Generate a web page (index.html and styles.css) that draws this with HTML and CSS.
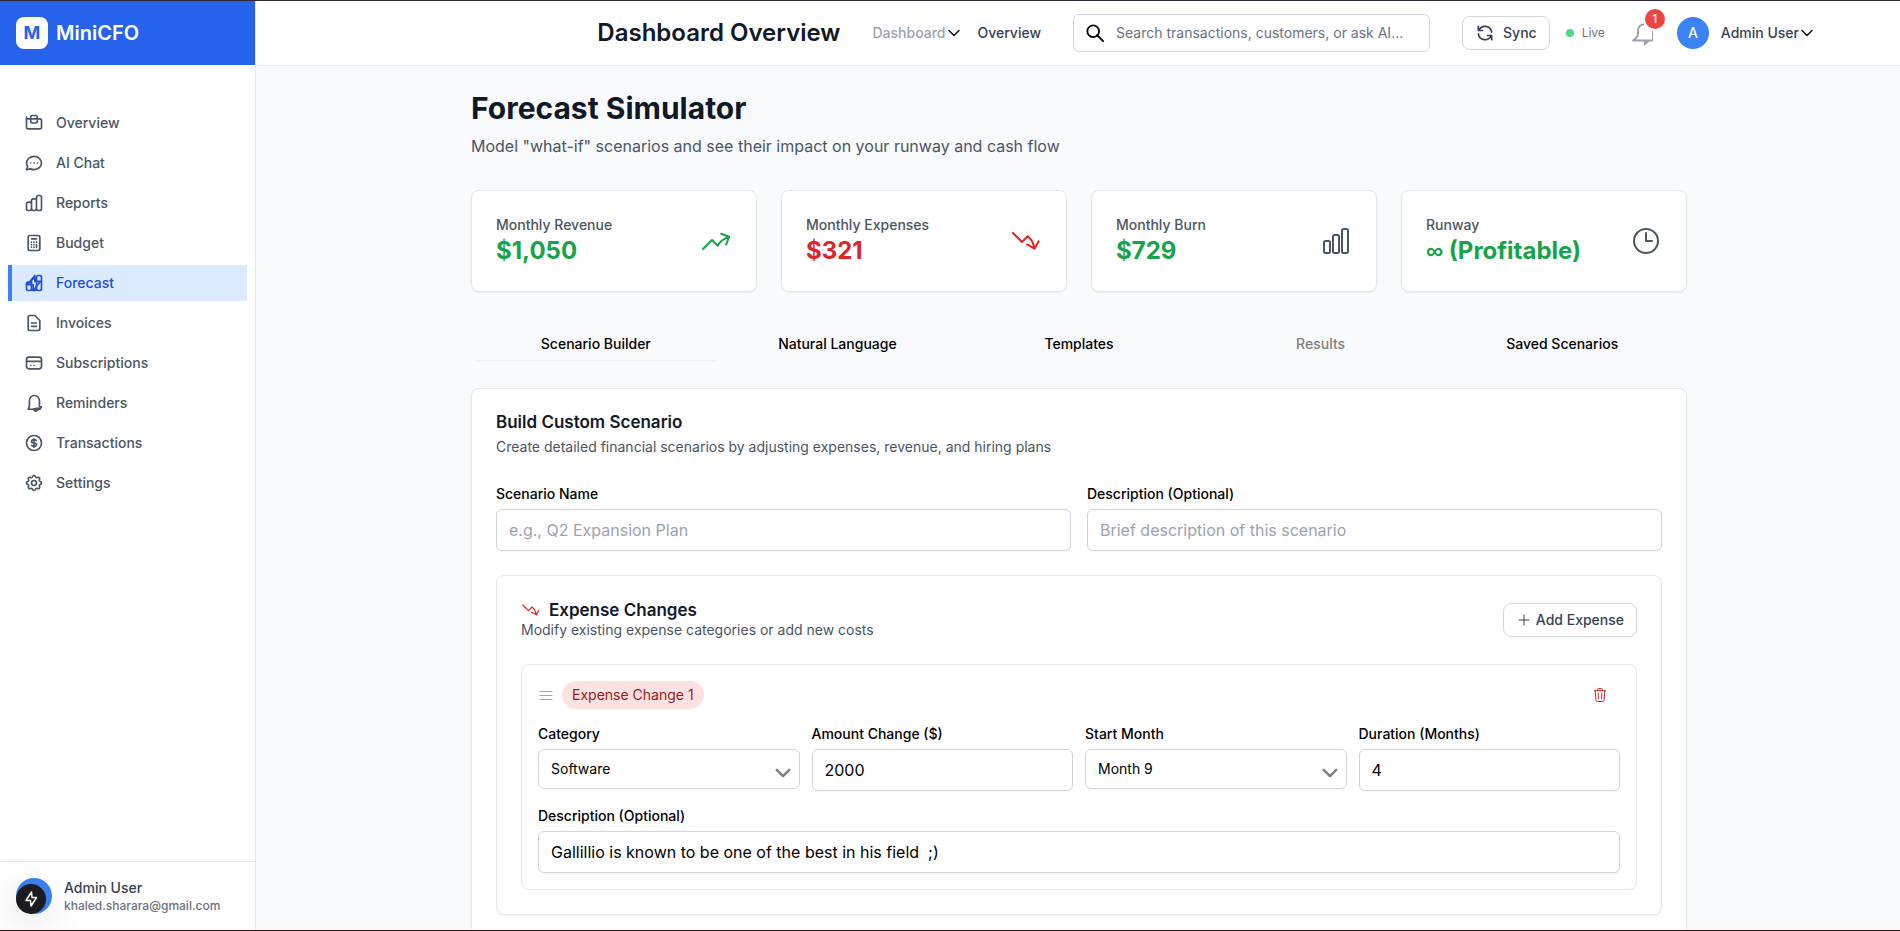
FILE: index.html
```html
<!DOCTYPE html>
<html lang="en">
<head>
<meta charset="utf-8">
<title>MiniCFO - Forecast Simulator</title>
<link rel="stylesheet" href="styles.css">
</head>
<body>
<svg class="sprite" aria-hidden="true">
  <symbol id="bars" viewBox="0 0 24 24"><path d="M3 13.125C3 12.504 3.504 12 4.125 12h2.25c.621 0 1.125.504 1.125 1.125v6.75C7.5 20.496 6.996 21 6.375 21h-2.25A1.125 1.125 0 013 19.875v-6.75zM9.75 8.625c0-.621.504-1.125 1.125-1.125h2.25c.621 0 1.125.504 1.125 1.125v11.25c0 .621-.504 1.125-1.125 1.125h-2.25a1.125 1.125 0 01-1.125-1.125V8.625zM16.5 4.125c0-.621.504-1.125 1.125-1.125h2.25C20.496 3 21 3.504 21 4.125v15.75c0 .621-.504 1.125-1.125 1.125h-2.25a1.125 1.125 0 01-1.125-1.125V4.125z"/></symbol>
  <symbol id="trend-up" viewBox="0 0 24 24"><path d="M2.25 18L9 11.25l4.306 4.307a11.95 11.95 0 015.814-5.519l2.74-1.22m0 0l-5.94-2.28m5.94 2.28l-2.28 5.941"/></symbol>
  <symbol id="trend-down" viewBox="0 0 24 24"><path d="M2.25 6L9 12.75l4.286-4.286a11.948 11.948 0 014.306 6.43l.776 2.898m0 0l3.182-5.511m-3.182 5.51l-5.511-3.181"/></symbol>
  <symbol id="chevron" viewBox="0 0 16 16"><path d="M3 5.5l5 5 5-5"/></symbol>
  <symbol id="joined-bars" viewBox="0 0 24 24"><path d="M9 19v-6a2 2 0 00-2-2H5a2 2 0 00-2 2v6a2 2 0 002 2h2a2 2 0 002-2zm0 0V9a2 2 0 012-2h2a2 2 0 012 2v10m-6 0a2 2 0 002 2h2a2 2 0 002-2m0 0V5a2 2 0 012-2h2a2 2 0 012 2v14a2 2 0 01-2 2h-2a2 2 0 01-2-2z"/></symbol>
</svg>

<div class="app">
  <aside class="sidebar">
    <div class="brand"><span class="brand-mark">M</span><span class="brand-name">MiniCFO</span></div>
    <nav class="nav" aria-label="Main">
      <a class="nav-item" href="#"><svg class="icon nav-icon" viewBox="0 0 24 24"><path d="M3 5v12a2 2 0 002 2h14a2 2 0 002-2V9a2 2 0 00-2-2H5a2 2 0 01-2-2z"/><rect x="8" y="3" width="8" height="9" rx="2"/></svg>Overview</a>
      <a class="nav-item" href="#"><svg class="icon nav-icon" viewBox="0 0 24 24"><path d="M8 12h.01M12 12h.01M16 12h.01M21 12c0 4.418-4.03 8-9 8a9.86 9.86 0 01-4.255-.949L3 20l1.395-3.72C3.512 15.042 3 13.574 3 12c0-4.418 4.03-8 9-8s9 3.582 9 8z"/></svg>AI Chat</a>
      <a class="nav-item" href="#"><svg class="icon nav-icon"><use href="#joined-bars"/></svg>Reports</a>
      <a class="nav-item" href="#"><svg class="icon nav-icon" viewBox="0 0 24 24"><path d="M9 7h6m0 10v-3m-3 3h.01M9 17h.01M9 14h.01M12 14h.01M15 11h.01M12 11h.01M9 11h.01M7 21h10a2 2 0 002-2V5a2 2 0 00-2-2H7a2 2 0 00-2 2v14a2 2 0 002 2z"/></svg>Budget</a>
      <a class="nav-item nav-item-active" href="#" aria-current="page"><svg class="icon nav-icon" viewBox="0 0 24 24"><use href="#joined-bars" width="24" height="24"/><path d="M13 10V3L4 14h7v7l9-11h-7z"/></svg>Forecast</a>
      <a class="nav-item" href="#"><svg class="icon nav-icon" viewBox="0 0 24 24"><path d="M9 12h6m-6 4h6m2 5H7a2 2 0 01-2-2V5a2 2 0 012-2h5.586a1 1 0 01.707.293l5.414 5.414a1 1 0 01.293.707V19a2 2 0 01-2 2z"/></svg>Invoices</a>
      <a class="nav-item" href="#"><svg class="icon nav-icon" viewBox="0 0 24 24"><path d="M3 10h18M8 15h.01M12 15h.01M6 19h12a3 3 0 003-3V8a3 3 0 00-3-3H6a3 3 0 00-3 3v8a3 3 0 003 3z"/></svg>Subscriptions</a>
      <a class="nav-item" href="#"><svg class="icon nav-icon" viewBox="0 0 24 24"><path d="M5 19l1.500-2.500V9a5.500 5.500 0 0112 0v7.500H21l-2 3H5z"/><path d="M11 19.500l3 2.500 5-3.500h-4z" fill="currentColor"/></svg>Reminders</a>
      <a class="nav-item" href="#"><svg class="icon nav-icon" viewBox="0 0 24 24"><path d="M12 8c-1.657 0-3 .895-3 2s1.343 2 3 2 3 .895 3 2-1.343 2-3 2m0-8c1.110 0 2.080.402 2.599 1M12 8V7m0 1v8m0 0v1m0-1c-1.110 0-2.080-.402-2.599-1M21 12a9 9 0 11-18 0 9 9 0 0118 0z"/></svg>Transactions</a>
      <a class="nav-item" href="#"><svg class="icon nav-icon" viewBox="0 0 24 24"><path d="M10.325 4.317c.426-1.756 2.924-1.756 3.350 0a1.724 1.724 0 002.573 1.066c1.543-.940 3.310.826 2.370 2.370a1.724 1.724 0 001.065 2.572c1.756.426 1.756 2.924 0 3.350a1.724 1.724 0 00-1.066 2.573c.940 1.543-.826 3.310-2.370 2.370a1.724 1.724 0 00-2.572 1.065c-.426 1.756-2.924 1.756-3.350 0a1.724 1.724 0 00-2.573-1.066c-1.543.940-3.310-.826-2.370-2.370a1.724 1.724 0 00-1.065-2.572c-1.756-.426-1.756-2.924 0-3.350a1.724 1.724 0 001.066-2.573c-.940-1.543.826-3.310 2.370-2.370.996.608 2.296.070 2.572-1.065z"/><circle cx="12" cy="12" r="3"/></svg>Settings</a>
    </nav>
    <div class="account">
      <div class="account-avatar">
        <button class="dev-button" type="button" aria-label="Developer tools"><svg class="icon bolt" viewBox="0 0 16 16"><path d="M8.500 1L3 9.500h4.500L8 15l5.500-8.500H9z"/></svg></button>
      </div>
      <div class="account-text"><div class="account-name">Admin User</div><div class="account-mail">khaled.sharara@gmail.com</div></div>
    </div>
  </aside>

  <div class="content">
    <header class="topbar">
      <h2 class="topbar-title">Dashboard Overview</h2>
      <nav class="crumbs" aria-label="Breadcrumb">
        <a class="crumb-parent" href="#">Dashboard<svg class="icon chevron"><use href="#chevron"/></svg></a>
        <a class="crumb-current" href="#">Overview</a>
      </nav>
      <div class="search">
        <svg class="icon search-icon" viewBox="0 0 20 20"><circle cx="8" cy="8" r="6.500"/><path d="M12.500 12.500L19 19"/></svg>
        <input class="search-input" type="text" aria-label="Search" placeholder="Search transactions, customers, or ask AI...">
      </div>
      <div class="status">
        <button class="button" type="button"><svg class="icon sync-icon" viewBox="0 0 24 24"><path d="M4 4v5h.582m15.356 2A8.001 8.001 0 004.582 9m0 0H9m11 11v-5h-.581m0 0a8.003 8.003 0 01-15.357-2m15.357 2H15"/></svg>Sync</button>
        <span class="live">Live</span>
      </div>
      <div class="user">
        <button class="bell" type="button" aria-label="Notifications"><svg class="icon bell-icon" viewBox="0 0 24 24"><path d="M15 3.500c-4 0-6 3-6 6.500v3c0 2-1 3-2.500 4.500L4 19.500h20"/><path class="bell-edge" d="M23.500 10v9"/><path class="bell-clapper" d="M14 20h7l-6 5v-3.500z"/></svg><span class="badge">1</span></button>
        <span class="user-avatar">A</span>
        <button class="user-menu" type="button">Admin User<svg class="icon chevron"><use href="#chevron"/></svg></button>
      </div>
    </header>

    <main class="main">
      <div class="page">
        <h1 class="page-title">Forecast Simulator</h1>
        <p class="page-lead">Model "what-if" scenarios and see their impact on your runway and cash flow</p>

        <section class="stats" aria-label="Key figures">
          <div class="stat"><div><div class="stat-label">Monthly Revenue</div><div class="stat-value green">$1,050</div></div><svg class="icon stat-icon green"><use href="#trend-up"/></svg></div>
          <div class="stat"><div><div class="stat-label">Monthly Expenses</div><div class="stat-value red">$321</div></div><svg class="icon stat-icon red"><use href="#trend-down"/></svg></div>
          <div class="stat"><div><div class="stat-label">Monthly Burn</div><div class="stat-value green">$729</div></div><svg class="icon stat-icon"><use href="#bars"/></svg></div>
          <div class="stat"><div><div class="stat-label">Runway</div><div class="stat-value green"><span class="infinity">∞</span> (Profitable)</div></div><svg class="icon stat-icon" viewBox="0 0 24 24"><path d="M12 6v6h4.500m4.500 0a9 9 0 11-18 0 9 9 0 0118 0z"/></svg></div>
        </section>

        <div class="tabs" role="tablist">
          <button class="tab tab-active" type="button" role="tab" aria-selected="true">Scenario Builder</button>
          <button class="tab" type="button" role="tab">Natural Language</button>
          <button class="tab" type="button" role="tab">Templates</button>
          <button class="tab" type="button" role="tab" disabled>Results</button>
          <button class="tab" type="button" role="tab">Saved Scenarios</button>
        </div>

        <section class="panel">
          <h3 class="heading">Build Custom Scenario</h3>
          <p class="note panel-note">Create detailed financial scenarios by adjusting expenses, revenue, and hiring plans</p>
          <div class="fields fields-two">
            <div><label class="label" for="name">Scenario Name</label><input class="input" id="name" type="text" placeholder="e.g., Q2 Expansion Plan"></div>
            <div><label class="label" for="desc">Description (Optional)</label><input class="input" id="desc" type="text" placeholder="Brief description of this scenario"></div>
          </div>

          <section class="expenses">
            <div class="expenses-head">
              <div>
                <h3 class="heading heading-icon"><svg class="icon heading-trend red"><use href="#trend-down"/></svg>Expense Changes</h3>
                <p class="note">Modify existing expense categories or add new costs</p>
              </div>
              <button class="button button-add" type="button"><svg class="icon small-icon" viewBox="0 0 16 16"><path d="M8 3v10M3 8h10"/></svg>Add Expense</button>
            </div>
            <div class="change">
              <div class="change-head">
                <svg class="icon grip" viewBox="0 0 16 16"><path d="M2 4.500h12M2 8.500h12M2 12.500h12"/></svg>
                <span class="pill">Expense Change 1</span>
                <button class="trash" type="button" aria-label="Remove expense change"><svg class="icon small-icon" viewBox="0 0 24 24"><path d="M14.740 9l-.346 9m-4.788 0L9.260 9m9.968-3.210c.342.052.682.107 1.022.166m-1.022-.165L18.160 19.673a2.250 2.250 0 01-2.244 2.077H8.084a2.250 2.250 0 01-2.244-2.077L4.772 5.790m14.456 0a48.108 48.108 0 00-3.478-.397m-12 .562c.340-.059.680-.114 1.022-.165m0 0a48.110 48.110 0 013.478-.397m7.500 0v-.916c0-1.180-.910-2.164-2.090-2.201a51.964 51.964 0 00-3.320 0c-1.180.037-2.090 1.022-2.090 2.201v.916m7.500 0a48.667 48.667 0 00-7.500 0"/></svg></button>
              </div>
              <div class="fields fields-four">
                <div><label class="label" for="category">Category</label><div class="select-wrap"><select class="select" id="category"><option>Software</option></select><svg class="icon select-arrow"><use href="#chevron"/></svg></div></div>
                <div><label class="label" for="amount">Amount Change ($)</label><input class="input" id="amount" type="text" inputmode="numeric" value="2000"></div>
                <div><label class="label" for="start">Start Month</label><div class="select-wrap"><select class="select" id="start"><option>Month 9</option></select><svg class="icon select-arrow"><use href="#chevron"/></svg></div></div>
                <div><label class="label" for="duration">Duration (Months)</label><input class="input" id="duration" type="text" inputmode="numeric" value="4"></div>
              </div>
              <div><label class="label" for="detail">Description (Optional)</label><input class="input" id="detail" type="text" value="Gallillio is known to be one of the best in his field  ;)"></div>
            </div>
          </section>
        </section>
      </div>
    </main>
  </div>
</div>
</body>
</html>
```
FILE: styles.css
```css
*, *::before, *::after { box-sizing: border-box; }
body, h1, h2, h3, p { margin: 0; }
body { font: 400 16px/24px Inter, "Liberation Sans", sans-serif; color: #000; background: #f9fafb; }
button, input, select { font-family: inherit; color: inherit; margin: 0; }
button { background: none; border: 0; padding: 0; cursor: pointer; }
a { color: inherit; text-decoration: none; }
.sprite { display: none; }
.icon { display: block; flex: none; fill: none; stroke: currentColor; stroke-width: 1.5; stroke-linecap: round; stroke-linejoin: round; }

.app { display: flex; height: 100vh; border-top: 1px solid #2b2a33; border-bottom: 1px solid #24180f; overflow: hidden; }

.sidebar { display: flex; flex-direction: column; flex: none; width: 256px; background: #fff; border-right: 1px solid #e5e7eb; }
.brand { display: flex; align-items: center; gap: 8px; height: 64px; flex: none; padding: 0 16px; background: #2563eb; color: #fff; }
.brand-mark { display: grid; place-items: center; width: 32px; height: 32px; border-radius: 8px; background: #fff; color: #2563eb; font-size: 18px; font-weight: 700; }
.brand-name { font-size: 20px; font-weight: 600; }
.nav { display: flex; flex-direction: column; gap: 4px; flex: 1; padding: 40px 8px 0; }
.nav-item { display: flex; align-items: center; gap: 12px; height: 36px; padding: 0 12px; border-left: 4px solid transparent; color: #4b5563; font-size: 14px; line-height: 20px; font-weight: 500; }
.nav-item-active { background: #dbeafe; border-color: #3b82f6; color: #1d4ed8; }
.nav-icon { width: 20px; height: 20px; stroke-width: 2; }
.account { display: flex; align-items: center; gap: 12px; flex: none; padding: 16px; border-top: 1px solid #e5e7eb; }
.account-avatar { position: relative; width: 36px; height: 36px; border-radius: 50%; background: #3b82f6; }
.dev-button { position: absolute; left: 0; bottom: 0; display: grid; place-items: center; width: 30px; height: 30px; border-radius: 50%; background: #1c1c1f; color: #fff; box-shadow: 0 8px 40px rgba(0, 0, 0, 0.18); }
.bolt { width: 16px; height: 16px; }
.account-name { color: #374151; font-size: 14px; line-height: 20px; font-weight: 500; }
.account-mail { color: #6b7280; font-size: 12px; line-height: 16px; font-weight: 500; }

.content { display: flex; flex-direction: column; flex: 1; min-width: 0; }
.topbar { display: flex; align-items: center; justify-content: flex-end; gap: 24px; flex: none; height: 65px; padding-right: 85px; background: #fff; border-bottom: 1px solid #e5e7eb; color: #374151; font-size: 14px; line-height: 20px; font-weight: 500; }
.topbar-title { color: #111827; font-size: 24px; line-height: 32px; font-weight: 600; }
.crumbs { display: flex; gap: 16px; margin: 0 8px; }
.crumb-parent, .user-menu { display: flex; align-items: center; }
.crumb-parent { color: #9ca3af; }
.chevron { width: 16px; height: 16px; color: #111; }
.search { display: flex; align-items: center; gap: 12px; width: 357px; height: 38px; padding: 0 12px; border: 1px solid #d1d5db; border-radius: 6px; }
.search-icon { width: 18px; height: 18px; color: #000; stroke-width: 2; }
.search-input { flex: 1; min-width: 0; padding: 0; border: 0; outline: 0; background: none; font-size: 14px; line-height: 20px; }
.search-input::placeholder { color: #6b7280; opacity: 1; }
.status { display: flex; align-items: center; gap: 16px; margin-left: 8px; }
.button { display: flex; align-items: center; gap: 8px; height: 34px; padding: 0 12px; border: 1px solid #d1d5db; border-radius: 8px; background: #fff; color: #374151; font-size: 14px; line-height: 20px; font-weight: 500; }
.sync-icon { width: 20px; height: 20px; stroke-width: 2; }
.live { display: flex; align-items: center; gap: 8px; color: #6b7280; font-size: 12px; line-height: 16px; font-weight: 400; }
.live::before { content: ""; width: 8px; height: 8px; border-radius: 50%; background: #4ade80; }
.user { display: flex; align-items: center; gap: 12px; }
.bell { position: relative; margin-right: 12px; color: #9ca3af; }
.bell-icon { width: 24px; height: 24px; stroke-width: 2; overflow: visible; stroke-linecap: butt; }
.bell-edge { stroke-width: 1; }
.bell-clapper { fill: currentColor; stroke: none; }
.badge { position: absolute; top: -12px; right: -12px; display: grid; place-items: center; width: 20px; height: 20px; border-radius: 50%; background: #ef4444; color: #fff; font-size: 12px; line-height: 16px; font-weight: 500; }
.user-avatar { display: grid; place-items: center; width: 32px; height: 32px; border-radius: 50%; background: #3b82f6; color: #fff; }
.user-menu { font-size: 14px; line-height: 20px; font-weight: 500; }

.main { flex: 1; min-height: 0; overflow: hidden; padding: 24px 30px 24px 32px; }
.page { max-width: 1216px; margin: 0 auto; }
.page-title { color: #111827; font-size: 30px; line-height: 36px; font-weight: 700; }
.page-lead { margin-top: 8px; color: #4b5563; }
.green { color: #16a34a; }
.red { color: #dc2626; }

.stats { display: grid; grid-template-columns: repeat(4, 1fr); gap: 24px; margin-top: 32px; }
.stat, .panel, .expenses { background: #fff; border: 1px solid #e5e7eb; border-radius: 8px; box-shadow: 0 1px 2px rgba(0, 0, 0, 0.05); padding: 24px; }
.stat { display: flex; align-items: center; justify-content: space-between; }
.stat-label { color: #4b5563; font-size: 14px; line-height: 20px; font-weight: 500; }
.stat-value { font-size: 24px; line-height: 32px; font-weight: 700; }
.infinity { font-family: "Liberation Sans", sans-serif; line-height: 1; }
.stat-icon { width: 32px; height: 32px; }
.stat-icon:not(.green):not(.red) { color: #4b5563; }

.tabs { display: grid; grid-template-columns: repeat(5, 1fr); margin: 32px 0 24px; padding: 4px; }
.tab { height: 32px; border-radius: 4px; font-size: 14px; line-height: 20px; font-weight: 500; }
.tab-active { box-shadow: 0 1px 2px rgba(0, 0, 0, 0.05); }
.tab:disabled { color: #808080; cursor: default; }

.heading { color: #111827; font-size: 17px; line-height: 18px; font-weight: 600; }
.heading-icon { display: flex; align-items: center; gap: 8px; }
.heading-trend { width: 20px; height: 20px; }
.note { color: #4b5563; font-size: 14px; line-height: 20px; }
.panel-note { margin: 6px 0 24px; }
.fields { display: grid; }
.fields-two { grid-template-columns: repeat(2, 1fr); gap: 16px; }
.fields-four { grid-template-columns: repeat(4, 1fr); gap: 12px; margin: 12px 0; }
.label { display: block; margin-bottom: 2px; font-size: 14px; line-height: 26px; font-weight: 500; }
.input { display: block; width: 100%; height: 42px; padding: 0 12px; border: 1px solid #d1d5db; border-radius: 6px; background: #fff; font-size: 16px; box-shadow: 0 1px 2px rgba(0, 0, 0, 0.05); }
.input::placeholder { color: #9ca3af; opacity: 1; }
.select-wrap { position: relative; }
.select { display: block; width: 100%; height: 40px; padding: 0 36px 2px 12px; border: 1px solid #d1d5db; border-radius: 6px; background: #fff; font-size: 14px; appearance: none; }
.select-arrow { position: absolute; right: 7px; bottom: 6px; width: 20px; height: 20px; color: #808080; stroke-width: 2; pointer-events: none; }

.expenses { margin-top: 24px; }
.expenses-head { display: flex; align-items: center; justify-content: space-between; margin-bottom: 24px; }
.button-add { gap: 4px; }
.small-icon { width: 16px; height: 16px; }
.button-add .small-icon { stroke-width: 1; }
.change { padding: 16px; border: 1px solid #e5e7eb; border-radius: 8px; }
.change-head { display: flex; align-items: center; gap: 8px; }
.grip { width: 16px; height: 16px; color: #9ca3af; stroke-width: 1; }
.pill { padding: 4px 10px; border-radius: 14px; background: #fee2e2; color: #991b1b; font-size: 14px; line-height: 20px; }
.trash { margin-left: auto; padding: 0 12px; color: #dc2626; }
```
